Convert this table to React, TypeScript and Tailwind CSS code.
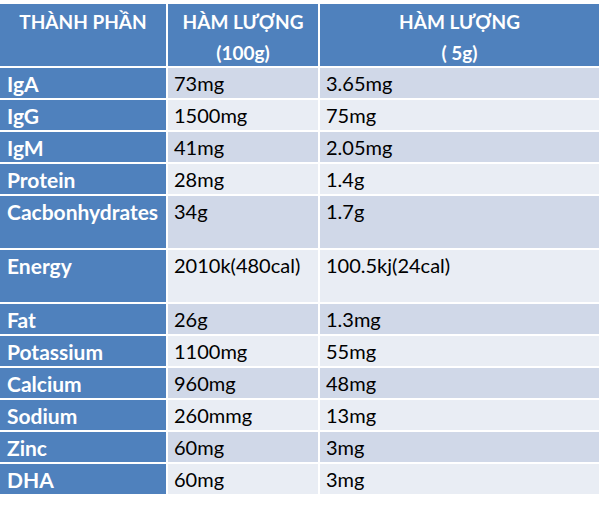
const rows: Array<[string, string, string, boolean?]> = [
  ["IgA", "73mg", "3.65mg"],
  ["IgG", "1500mg", "75mg"],
  ["IgM", "41mg", "2.05mg"],
  ["Protein", "28mg", "1.4g"],
  ["Cacbonhydrates", "34g", "1.7g", true],
  ["Energy", "2010k(480cal)", "100.5kj(24cal)", true],
  ["Fat", "26g", "1.3mg"],
  ["Potassium", "1100mg", "55mg"],
  ["Calcium", "960mg", "48mg"],
  ["Sodium", "260mmg", "13mg"],
  ["Zinc", "60mg", "3mg"],
  ["DHA", "60mg", "3mg"],
];

export default function App() {
  return (
    <div className="w-[600px] h-[509px] bg-white pt-[4px] font-['Lato','Open_Sans',sans-serif]">
      <div className="grid w-[599px] grid-cols-[166px_150px_279px] gap-[2px] bg-white">
        <div className="flex h-[62px] items-start justify-center bg-[#4f81bd] pt-[2px] text-[19px] font-bold leading-[31px] text-white">
          THÀNH PHẦN
        </div>
        <div className="flex h-[62px] flex-col items-center bg-[#4f81bd] pt-[2px] text-[19px] font-bold leading-[31px] text-white">
          <span>HÀM LƯỢNG</span>
          <span>(100g)</span>
        </div>
        <div className="flex h-[62px] flex-col items-center bg-[#4f81bd] pt-[2px] text-[19px] font-bold leading-[31px] text-white">
          <span>HÀM LƯỢNG</span>
          <span>( 5g)</span>
        </div>
        {rows.map(([name, a, b, tall], i) => {
          const bg = i % 2 === 0 ? "bg-[#d0d8e8]" : "bg-[#e9edf4]";
          const h = tall ? "h-[52px]" : "h-[30px]";
          return [
            <div
              key={name + "n"}
              className={`${h} bg-[#4f81bd] pl-[7px] text-[21px] font-bold leading-[31px] text-white`}
            >
              {name}
            </div>,
            <div key={name + "a"} className={`${h} ${bg} pl-[6px] text-[20px] leading-[31px] text-black`}>
              {a}
            </div>,
            <div key={name + "b"} className={`${h} ${bg} pl-[6px] text-[20px] leading-[31px] text-black`}>
              {b}
            </div>,
          ];
        })}
      </div>
    </div>
  );
}
